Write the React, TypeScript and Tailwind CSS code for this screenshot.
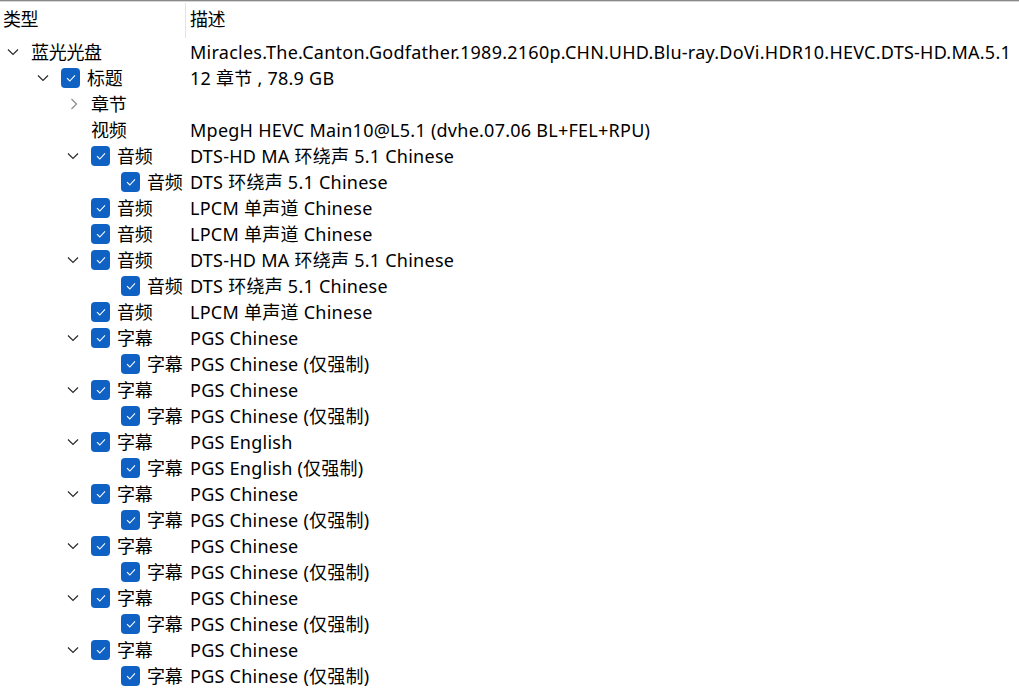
import React from "react";

type Row = {
  level: number;
  chev?: "open" | "closed";
  cb?: boolean;
  type: string;
  desc: string;
};

const rows: Row[] = [
  { level: 0, chev: "open", type: "蓝光光盘", desc: "Miracles.The.Canton.Godfather.1989.2160p.CHN.UHD.Blu-ray.DoVi.HDR10.HEVC.DTS-HD.MA.5.1" },
  { level: 1, chev: "open", cb: true, type: "标题", desc: "12 章节 , 78.9 GB" },
  { level: 2, chev: "closed", type: "章节", desc: "" },
  { level: 2, type: "视频", desc: "MpegH HEVC Main10@L5.1 (dvhe.07.06 BL+FEL+RPU)" },
  { level: 2, chev: "open", cb: true, type: "音频", desc: "DTS-HD MA 环绕声 5.1 Chinese" },
  { level: 3, cb: true, type: "音频", desc: "DTS 环绕声 5.1 Chinese" },
  { level: 2, cb: true, type: "音频", desc: "LPCM 单声道 Chinese" },
  { level: 2, cb: true, type: "音频", desc: "LPCM 单声道 Chinese" },
  { level: 2, chev: "open", cb: true, type: "音频", desc: "DTS-HD MA 环绕声 5.1 Chinese" },
  { level: 3, cb: true, type: "音频", desc: "DTS 环绕声 5.1 Chinese" },
  { level: 2, cb: true, type: "音频", desc: "LPCM 单声道 Chinese" },
  { level: 2, chev: "open", cb: true, type: "字幕", desc: "PGS Chinese" },
  { level: 3, cb: true, type: "字幕", desc: "PGS Chinese (仅强制)" },
  { level: 2, chev: "open", cb: true, type: "字幕", desc: "PGS Chinese" },
  { level: 3, cb: true, type: "字幕", desc: "PGS Chinese (仅强制)" },
  { level: 2, chev: "open", cb: true, type: "字幕", desc: "PGS English" },
  { level: 3, cb: true, type: "字幕", desc: "PGS English (仅强制)" },
  { level: 2, chev: "open", cb: true, type: "字幕", desc: "PGS Chinese" },
  { level: 3, cb: true, type: "字幕", desc: "PGS Chinese (仅强制)" },
  { level: 2, chev: "open", cb: true, type: "字幕", desc: "PGS Chinese" },
  { level: 3, cb: true, type: "字幕", desc: "PGS Chinese (仅强制)" },
  { level: 2, chev: "open", cb: true, type: "字幕", desc: "PGS Chinese" },
  { level: 3, cb: true, type: "字幕", desc: "PGS Chinese (仅强制)" },
  { level: 2, chev: "open", cb: true, type: "字幕", desc: "PGS Chinese" },
  { level: 3, cb: true, type: "字幕", desc: "PGS Chinese (仅强制)" },
];

const indent = ["w-0", "w-[30px]", "w-[60px]", "w-[90px]"];

function Chevron({ kind }: { kind?: "open" | "closed" }) {
  return (
    <div className="w-[31px] h-[26px] shrink-0 flex items-center justify-center pr-[6px]">
      {kind === "open" && (
        <svg width="12" height="8" viewBox="0 0 12 8">
          <path d="M1 1.5 L6 6.5 L11 1.5" fill="none" stroke="#2b2b2b" strokeWidth="1.2" />
        </svg>
      )}
      {kind === "closed" && (
        <svg width="8" height="12" viewBox="0 0 8 12" className="ml-[3px]">
          <path d="M1.5 1 L6.5 6 L1.5 11" fill="none" stroke="#8a8a8a" strokeWidth="1.2" />
        </svg>
      )}
    </div>
  );
}

function Check() {
  return (
    <div className="w-[19px] h-[20px] shrink-0 rounded-[4px] bg-[#0f62c4] flex items-center justify-center mr-[7px]">
      <svg width="10" height="8" viewBox="0 0 10 8">
        <path d="M1 4.2 L3.8 7 L9 1.4" fill="none" stroke="#ffffff" strokeWidth="1.1" />
      </svg>
    </div>
  );
}

export default function App() {
  return (
    <div
      className="w-[1019px] h-[689px] bg-white overflow-hidden text-black text-[18px]"
      style={{ fontFamily: '"Noto Sans", "Noto Sans CJK SC", sans-serif' }}
    >
      <div className="h-px bg-[#8a8a8a]" />
      <div className="h-px bg-[#d6d6d6]" />
      <div className="flex h-[37px] items-center">
        <div className="w-[185px] shrink-0 pl-[3px] pb-[3px] tracking-[-0.5px]">类型</div>
        <div className="w-px h-[35px] self-start mt-[1px] bg-[#e3e3e3]" />
        <div className="pl-[4px] pb-[3px] tracking-[-0.5px]">描述</div>
      </div>
      <div className="flex flex-col">
        {rows.map((r, i) => (
          <div key={i} className="flex h-[26px] items-center whitespace-nowrap">
            <div className="w-[185px] shrink-0 flex items-center overflow-hidden">
              <div className={`${indent[r.level]} shrink-0`} />
              <Chevron kind={r.chev} />
              {r.cb && <Check />}
              <span className="tracking-[-0.3px]">{r.type}</span>
            </div>
            <div className="pl-[5px] tracking-[0.25px]">{r.desc}</div>
          </div>
        ))}
      </div>
    </div>
  );
}
